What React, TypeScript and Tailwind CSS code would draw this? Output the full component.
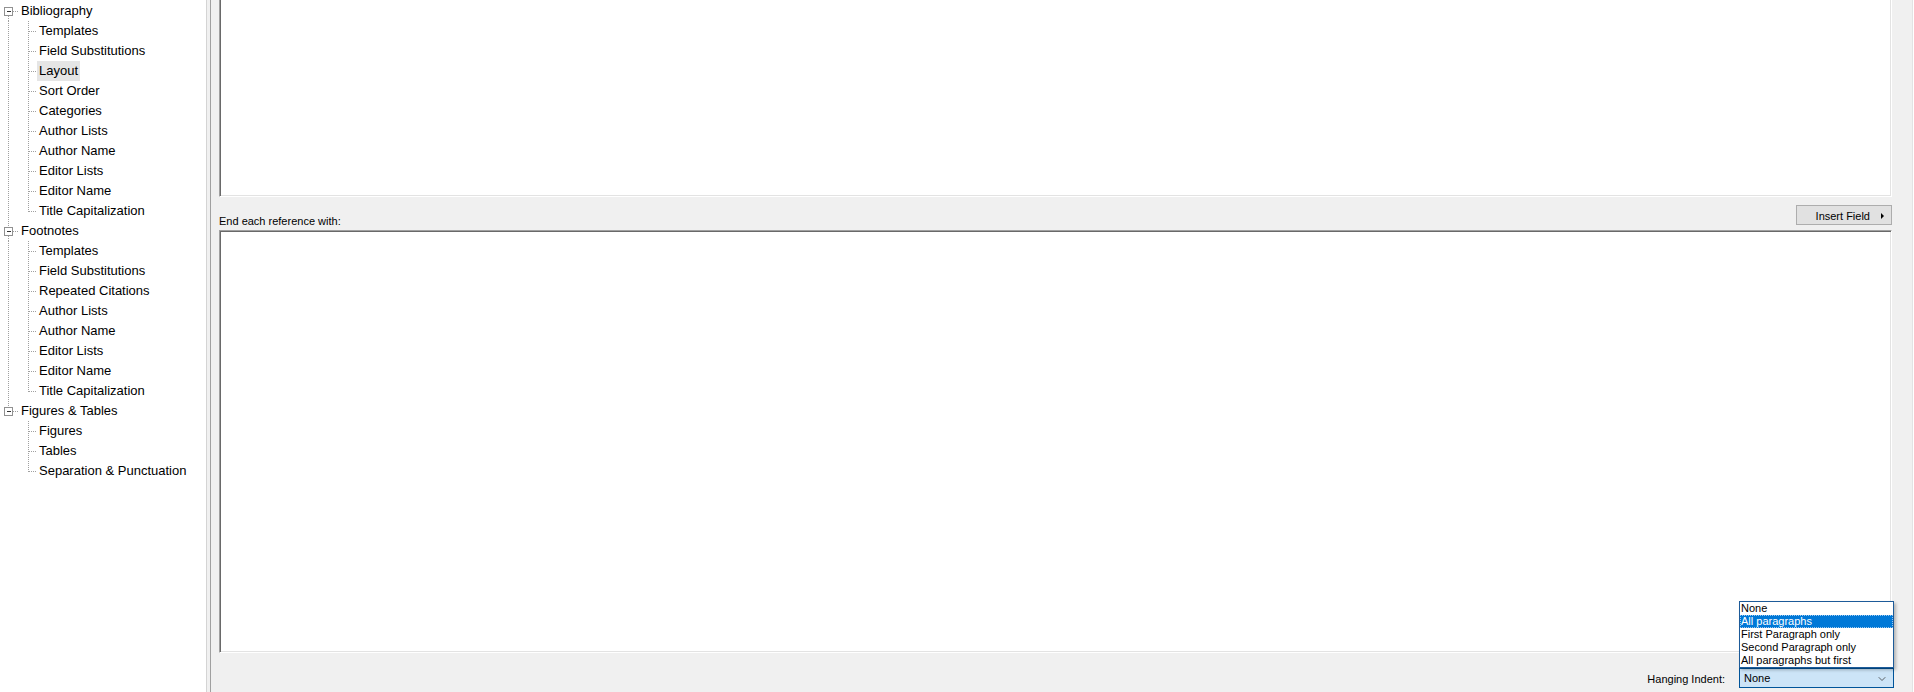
import { ChevronDown } from 'lucide-react';

type TreeRow = {
  label: string;
  kind: 'parent' | 'child';
  first?: boolean;
  last?: boolean;
  outer?: boolean; // the x=8 trunk keeps going past this row
  selected?: boolean;
};

const groups: { title: string; items: string[] }[] = [
  {
    title: 'Bibliography',
    items: [
      'Templates',
      'Field Substitutions',
      'Layout',
      'Sort Order',
      'Categories',
      'Author Lists',
      'Author Name',
      'Editor Lists',
      'Editor Name',
      'Title Capitalization',
    ],
  },
  {
    title: 'Footnotes',
    items: [
      'Templates',
      'Field Substitutions',
      'Repeated Citations',
      'Author Lists',
      'Author Name',
      'Editor Lists',
      'Editor Name',
      'Title Capitalization',
    ],
  },
  {
    title: 'Figures & Tables',
    items: ['Figures', 'Tables', 'Separation & Punctuation'],
  },
];

function buildRows(): TreeRow[] {
  const rows: TreeRow[] = [];
  groups.forEach((g, gi) => {
    const lastGroup = gi === groups.length - 1;
    rows.push({ label: g.title, kind: 'parent', first: gi === 0, last: lastGroup });
    g.items.forEach((item, ii) => {
      rows.push({
        label: item,
        kind: 'child',
        last: ii === g.items.length - 1,
        outer: !lastGroup,
        selected: gi === 0 && item === 'Layout',
      });
    });
  });
  return rows;
}

const dot = { stroke: '#a0a0a0', strokeDasharray: '1 1', shapeRendering: 'crispEdges' as const };

function Connector({ row }: { row: TreeRow }) {
  if (row.kind === 'parent') {
    return (
      <svg width="20" height="20" className="shrink-0">
        {!row.first && <line x1="8.5" y1="0" x2="8.5" y2="6" {...dot} />}
        {!row.last && <line x1="8.5" y1="15" x2="8.5" y2="20" {...dot} />}
        <line x1="13" y1="10.5" x2="19" y2="10.5" {...dot} />
        <rect x="4.5" y="6.5" width="8" height="8" fill="#fff" stroke="#919191" shapeRendering="crispEdges" />
        <line x1="6.5" y1="10.5" x2="11" y2="10.5" stroke="#333" shapeRendering="crispEdges" />
      </svg>
    );
  }
  return (
    <svg width="37" height="20" className="shrink-0">
      {row.outer && <line x1="8.5" y1="0" x2="8.5" y2="20" {...dot} />}
      <line x1="28.5" y1="0" x2="28.5" y2={row.last ? 10.5 : 20} {...dot} />
      <line x1="29" y1="10.5" x2="37" y2="10.5" {...dot} />
    </svg>
  );
}

function Tree() {
  const rows = buildRows();
  return (
    <div className="w-[207px] shrink-0 bg-white border-r border-[#d4d4d4] pt-[1px] text-[13px] text-black">
      {rows.map((row, i) => (
        <div key={i} className="flex h-[20px] items-center">
          <Connector row={row} />
          <span
            className={
              row.kind === 'parent'
                ? 'pl-[1px] leading-[20px] whitespace-nowrap'
                : `px-[2px] leading-[20px] whitespace-nowrap ${row.selected ? 'bg-[#e5e5e5]' : ''}`
            }
          >
            {row.label}
          </span>
        </div>
      ))}
    </div>
  );
}

const options = [
  'None',
  'All paragraphs',
  'First Paragraph only',
  'Second Paragraph only',
  'All paragraphs but first',
];

function HangingIndentCombo() {
  return (
    <div className="relative -mr-[2px] w-[155px]">
      {/* open list sits above the box */}
      <div className="absolute bottom-full left-0 w-[155px] border border-[#1d5b99] bg-white shadow-[2px_2px_3px_rgba(0,0,0,0.25)]">
        {options.map((o) => (
          <div
            key={o}
            className={
              o === 'All paragraphs'
                ? 'h-[13px] bg-[#0078d7] pl-[1px] leading-[13px] text-white outline-1 -outline-offset-1 outline-dotted outline-[#9cc8f0]'
                : 'h-[13px] pl-[1px] leading-[13px] text-black'
            }
          >
            {o}
          </div>
        ))}
      </div>
      <div className="flex h-[20px] items-center justify-between border border-[#005499] bg-[#cce4f7] pl-[4px] pr-[5px] pt-[1px]">
        <span className="text-black">None</span>
        <ChevronDown size={12} strokeWidth={1.5} className="text-[#333]" />
      </div>
    </div>
  );
}

export default function App() {
  return (
    <div className="flex h-[692px] w-[1914px] overflow-hidden bg-white font-['Liberation_Sans',Arial,sans-serif]">
      <Tree />
      <div className="w-[4px] shrink-0 bg-[#f0f0f0] border-r border-[#a0a0a0]" />
      <div className="mr-[1px] flex flex-1 flex-col bg-[#f0f0f0] pl-[8px] pr-[20px] border-r border-[#e3e3e3] text-[11px] text-black">
        {/* top text box, scrolled so its top edge is out of view */}
        <div className="h-[197px] shrink-0 border-l border-b border-r border-l-[#a0a0a0] border-b-white border-r-white bg-white shadow-[inset_1px_0_0_#696969,inset_-1px_-1px_0_#e3e3e3]" />

        <div className="mt-[8px] flex h-[25px] shrink-0 items-start justify-between">
          <span className="mt-[8px] leading-[16px]">End each reference with:</span>
          <button className="flex h-[20px] w-[96px] items-center justify-end gap-[11px] border border-[#adadad] bg-[#e1e1e1] pr-[7px] pt-[2px] text-[11px]">
            <span>Insert Field</span>
            <svg width="3" height="6" viewBox="0 0 3 6">
              <path d="M0 0 L3 3 L0 6 Z" fill="#000" />
            </svg>
          </button>
        </div>

        <div className="h-[423px] shrink-0 border border-t-[#a0a0a0] border-l-[#a0a0a0] border-b-white border-r-white bg-white shadow-[inset_1px_1px_0_#696969,inset_-1px_-1px_0_#e3e3e3]" />

        <div className="flex h-[39px] shrink-0 items-start justify-end gap-[14px] pt-[15px]">
          <span className="pt-[1px] leading-[20px]">Hanging Indent:</span>
          <HangingIndentCombo />
        </div>
      </div>
    </div>
  );
}
